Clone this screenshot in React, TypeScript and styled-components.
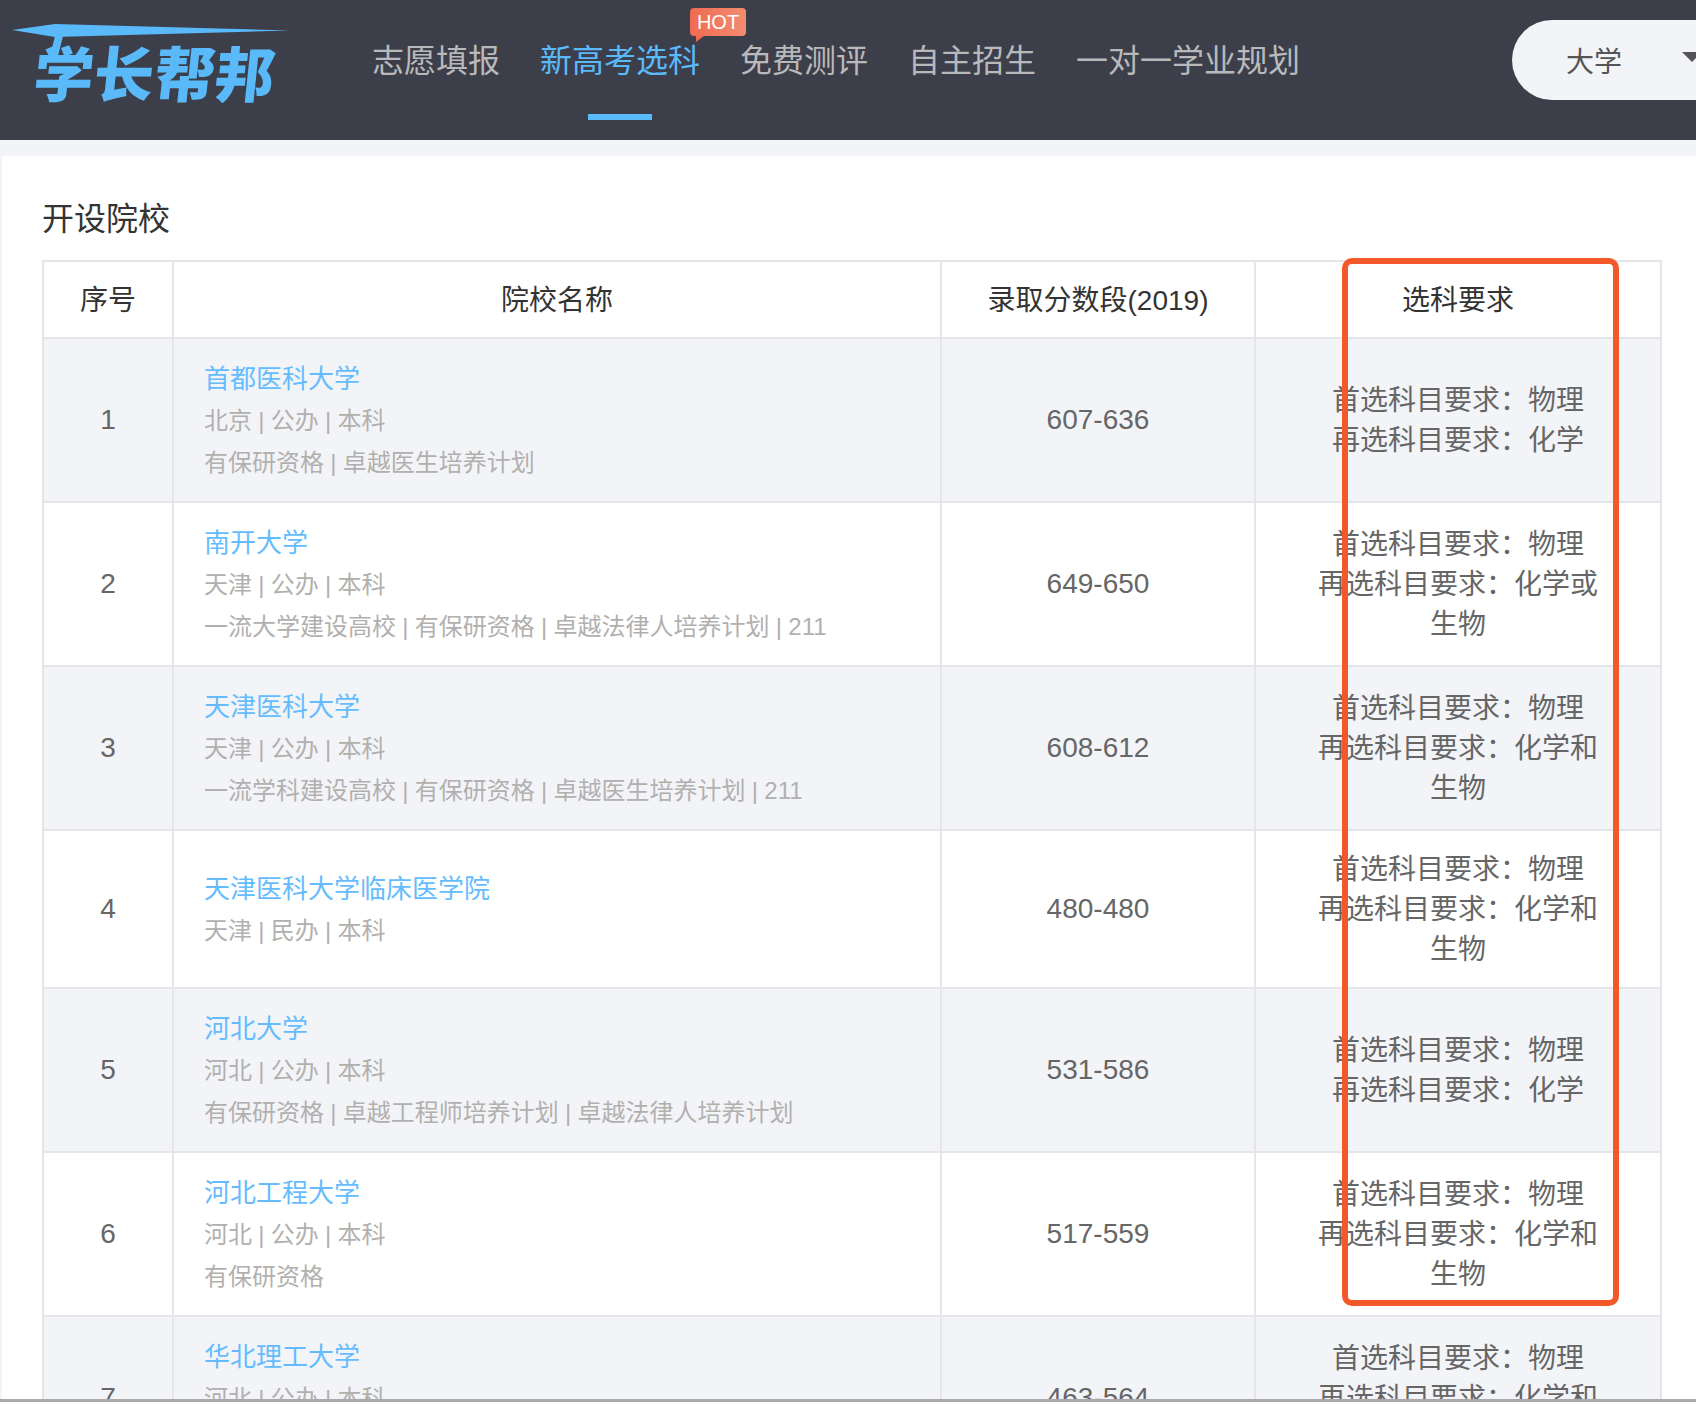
import React from "react";
import styled, { createGlobalStyle } from "styled-components";

const Global = createGlobalStyle`
  html, body { margin: 0; padding: 0; background: #fff; }
  body { font-family: "Liberation Sans", "Noto Sans CJK SC", sans-serif; }
`;

const Frame = styled.div`
  width: 1696px;
  height: 1402px;
  overflow: hidden;
  box-sizing: border-box;
  border-bottom: 3px solid #a9a9ab;
  background: #f3f4f8;
`;

const Header = styled.header`
  display: flex;
  align-items: flex-start;
  height: 140px;
  background: #3c3e4a;
  overflow: hidden;
`;

const LogoMark = styled.svg`
  flex: none;
  width: 300px;
  height: 140px;
`;

const Nav = styled.nav`
  flex: 1;
  display: flex;
  gap: 40px;
  margin-left: 72px;
`;

const NavItem = styled.a<{ $active?: boolean }>`
  position: relative;
  display: block;
  height: 120px;
  box-sizing: border-box;
  padding-top: 41px;
  font-size: 32px;
  line-height: 40px;
  white-space: nowrap;
  color: ${(p) => (p.$active ? "#5ab9f9" : "#b9b9bb")};
  ${(p) =>
    p.$active &&
    `&::after {
      content: "";
      position: absolute;
      left: 50%;
      bottom: 0;
      width: 64px;
      height: 6px;
      margin-left: -32px;
      background: #5ab9f9;
    }`}
`;

const HotBadge = styled.span`
  position: absolute;
  left: 150px;
  top: 8px;
  width: 56px;
  height: 28px;
  border-radius: 4px;
  background: linear-gradient(90deg, #ee6b52, #f48c70);
  color: #fff;
  font-size: 20px;
  line-height: 28px;
  text-align: center;
  &::after {
    content: "";
    position: absolute;
    left: 6px;
    top: 28px;
    border-top: 6px solid #ee6b52;
    border-right: 8px solid transparent;
  }
`;

const SchoolSelect = styled.div`
  flex: none;
  display: flex;
  align-items: center;
  gap: 60px;
  width: 220px;
  height: 80px;
  box-sizing: border-box;
  margin: 20px -36px 0 0;
  padding-left: 54px;
  border-radius: 40px 0 0 40px;
  background: #f3f4f8;
  color: #555;
  font-size: 28px;
`;

const Caret = styled.i`
  flex: none;
  border-top: 10px solid #555;
  border-left: 10px solid transparent;
  border-right: 10px solid transparent;
  margin-top: -6px;
`;

const Main = styled.main`
  position: relative;
  margin: 16px 0 0 2px;
  padding: 43px 0 0 40px;
  height: 1300px;
  background: #fff;
`;

const Title = styled.h2`
  margin: 0 0 21px;
  font-size: 32px;
  line-height: 40px;
  font-weight: 400;
  color: #333;
`;

const TableWrap = styled.div`
  position: relative;
  width: 1620px;
`;

const Table = styled.table`
  width: 1620px;
  table-layout: fixed;
  border-collapse: collapse;
  font-size: 28px;
  line-height: 40px;
  color: #666;
`;

const Head = styled.th`
  height: 77px;
  padding: 3px 0 0;
  box-sizing: border-box;
  border: 2px solid #e6e6e9;
  font-weight: 400;
  color: #333;
  text-align: center;
  background: #fff;
`;

const Row = styled.tr<{ $striped: boolean }>`
  background: ${(p) => (p.$striped ? "#f3f4f8" : "#fff")};
`;

const Cell = styled.td`
  padding: 18px 50px;
  border: 2px solid #e6e6e9;
  text-align: center;
  vertical-align: middle;
`;

const RequirementCell = styled(Cell)`
  padding: 19px 50px 17px;
`;

const NameCell = styled.td`
  padding: 19px 30px 17px;
  border: 2px solid #e6e6e9;
  text-align: left;
  vertical-align: middle;
`;

const SchoolName = styled.div`
  font-size: 26px;
  line-height: 42px;
  color: #64bcff;
`;

const Meta = styled.div`
  font-size: 24px;
  line-height: 42px;
  word-spacing: -0.4px;
  color: #b2b0ae;
`;

const Highlight = styled.div`
  position: absolute;
  left: 1300px;
  top: -2px;
  width: 277px;
  height: 1048px;
  box-sizing: border-box;
  border: 6px solid #f3582a;
  border-radius: 10px;
  pointer-events: none;
`;

const schools = [
  { name: "首都医科大学", place: "北京 | 公办 | 本科", tags: "有保研资格 | 卓越医生培养计划", score: "607-636", second: "化学" },
  { name: "南开大学", place: "天津 | 公办 | 本科", tags: "一流大学建设高校 | 有保研资格 | 卓越法律人培养计划 | 211", score: "649-650", second: "化学或生物" },
  { name: "天津医科大学", place: "天津 | 公办 | 本科", tags: "一流学科建设高校 | 有保研资格 | 卓越医生培养计划 | 211", score: "608-612", second: "化学和生物" },
  { name: "天津医科大学临床医学院", place: "天津 | 民办 | 本科", tags: "", score: "480-480", second: "化学和生物" },
  { name: "河北大学", place: "河北 | 公办 | 本科", tags: "有保研资格 | 卓越工程师培养计划 | 卓越法律人培养计划", score: "531-586", second: "化学" },
  { name: "河北工程大学", place: "河北 | 公办 | 本科", tags: "有保研资格", score: "517-559", second: "化学和生物" },
  { name: "华北理工大学", place: "河北 | 公办 | 本科", tags: "有保研资格", score: "463-564", second: "化学和生物" },
];

const navItems = ["志愿填报", "新高考选科", "免费测评", "自主招生", "一对一学业规划"];

export default function App() {
  return (
    <Frame>
      <Global />
      <Header>
        <LogoMark viewBox="0 0 300 140">
          <polygon points="12,30 55,24 290,30.5 55,37" fill="#5ab9f9" />
          <polygon points="55,36 63,36 58,56 50,56" fill="#5ab9f9" />
          <g transform="translate(8 0) skewX(-6)" fill="#5ab9f9">
            <text
              x="34 94 155 215"
              y="97"
              fontFamily="'Noto Sans CJK SC', sans-serif"
              fontWeight="900"
              fontSize="60"
            >
              学长帮邦
            </text>
          </g>
        </LogoMark>
        <Nav>
          {navItems.map((item, i) => (
            <NavItem key={item} $active={i === 1}>
              {item}
              {i === 1 && <HotBadge>HOT</HotBadge>}
            </NavItem>
          ))}
        </Nav>
        <SchoolSelect>
          大学
          <Caret />
        </SchoolSelect>
      </Header>
      <Main>
        <Title>开设院校</Title>
        <TableWrap>
          <Table>
            <colgroup>
              <col width="130" />
              <col width="768" />
              <col width="314" />
              <col width="406" />
            </colgroup>
            <thead>
              <tr>
                <Head>序号</Head>
                <Head>院校名称</Head>
                <Head>录取分数段(2019)</Head>
                <Head>选科要求</Head>
              </tr>
            </thead>
            <tbody>
              {schools.map((s, i) => (
                <Row key={s.name} $striped={i % 2 === 0}>
                  <Cell>{i + 1}</Cell>
                  <NameCell>
                    <SchoolName>{s.name}</SchoolName>
                    <Meta>{s.place}</Meta>
                    {s.tags && <Meta>{s.tags}</Meta>}
                  </NameCell>
                  <Cell>{s.score}</Cell>
                  <RequirementCell>
                    首选科目要求：物理
                    <br />
                    再选科目要求：{s.second}
                  </RequirementCell>
                </Row>
              ))}
            </tbody>
          </Table>
          <Highlight />
        </TableWrap>
      </Main>
    </Frame>
  );
}
